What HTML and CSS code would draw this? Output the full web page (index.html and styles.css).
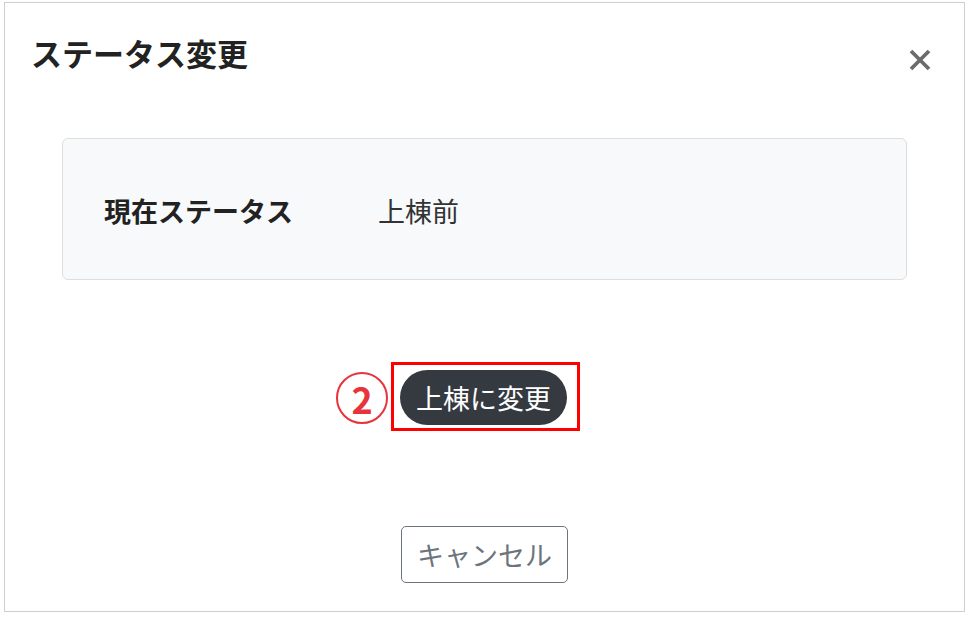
FILE: index.html
```html
<!DOCTYPE html>
<html lang="ja">
<head>
    <meta charset="UTF-8">
    <meta name="viewport" content="width=device-width, initial-scale=1.0">
    <title>ステータス変更</title>
    <link rel="stylesheet" href="styles.css">
</head>
<body>
    <div class="modal">
        <div class="modal-header">
            <h2 class="modal-title">ステータス変更</h2>
            <button type="button" class="close-btn" aria-label="閉じる">
                <svg width="22" height="22" viewBox="0 0 22 22">
                    <path d="M2 2 L20 20 M20 2 L2 20" stroke="#6b6b6b" stroke-width="3.8" stroke-linecap="butt"/>
                </svg>
            </button>
        </div>

        <div class="modal-body">
            <div class="status-box">
                <span class="status-label">現在ステータス</span>
                <span class="status-value">上棟前</span>
            </div>

            <div class="action-row">
                <div class="highlight">
                    <span class="step-mark">2</span>
                    <button type="button" class="btn-dark">上棟に変更</button>
                </div>
            </div>

            <div class="cancel-row">
                <button type="button" class="btn-cancel">キャンセル</button>
            </div>
        </div>
    </div>
</body>
</html>
```

FILE: styles.css
```css
body {
    margin: 0;
    padding: 2px 0 0 4px;
    font-family: "Noto Sans CJK JP", "Noto Sans", sans-serif;
    background-color: #fff;
}
.modal {
    width: 959px;
    height: 608px;
    border: 1px solid #cfcfcf;
    display: flex;
    flex-direction: column;
}
.modal-header {
    display: flex;
    justify-content: space-between;
    padding: 30px 33px 0 26px;
}
.modal-title {
    margin: 0;
    font-size: 31px;
    line-height: 40px;
    font-weight: bold;
    color: #222;
}
.close-btn {
    background: none;
    border: none;
    padding: 0;
    margin-top: 16px;
    width: 22px;
    height: 22px;
    cursor: pointer;
}
.modal-body {
    padding: 0 57px;
}
.status-box {
    margin-top: 65px;
    height: 142px;
    box-sizing: border-box;
    background-color: #f8f9fa;
    border: 1px solid #dcdee0;
    border-radius: 6px;
    display: flex;
    align-items: center;
    padding: 2px 0 0 41px;
    font-size: 27px;
}
.status-label {
    width: 274px;
    font-weight: bold;
    color: #222;
}
.status-value {
    color: #333;
}
.action-row {
    margin-top: 82px;
    display: flex;
    justify-content: center;
}
.highlight {
    position: relative;
    border: 3px solid #f00;
    padding: 5px 10px 3px 6px;
    display: flex;
    margin-left: 2px;
}
.step-mark {
    position: absolute;
    right: calc(100% + 6px);
    top: 7px;
    width: 48px;
    height: 48px;
    border: 2px solid #e8333c;
    border-radius: 50%;
    color: #e8333c;
    font-size: 36px;
    font-weight: bold;
    line-height: 48px;
    text-align: center;
}
.btn-dark {
    height: 55px;
    padding: 0 16px;
    background-color: #343a40;
    color: #fff;
    border: none;
    border-radius: 28px;
    font-family: inherit;
    font-size: 27px;
    line-height: 55px;
    cursor: pointer;
}
.cancel-row {
    margin-top: 95px;
    display: flex;
    justify-content: center;
}
.btn-cancel {
    width: 167px;
    height: 57px;
    padding: 0;
    background-color: #fff;
    color: #6c757d;
    border: 1px solid #6c757d;
    border-radius: 5px;
    font-family: inherit;
    font-size: 27px;
    cursor: pointer;
}
```
